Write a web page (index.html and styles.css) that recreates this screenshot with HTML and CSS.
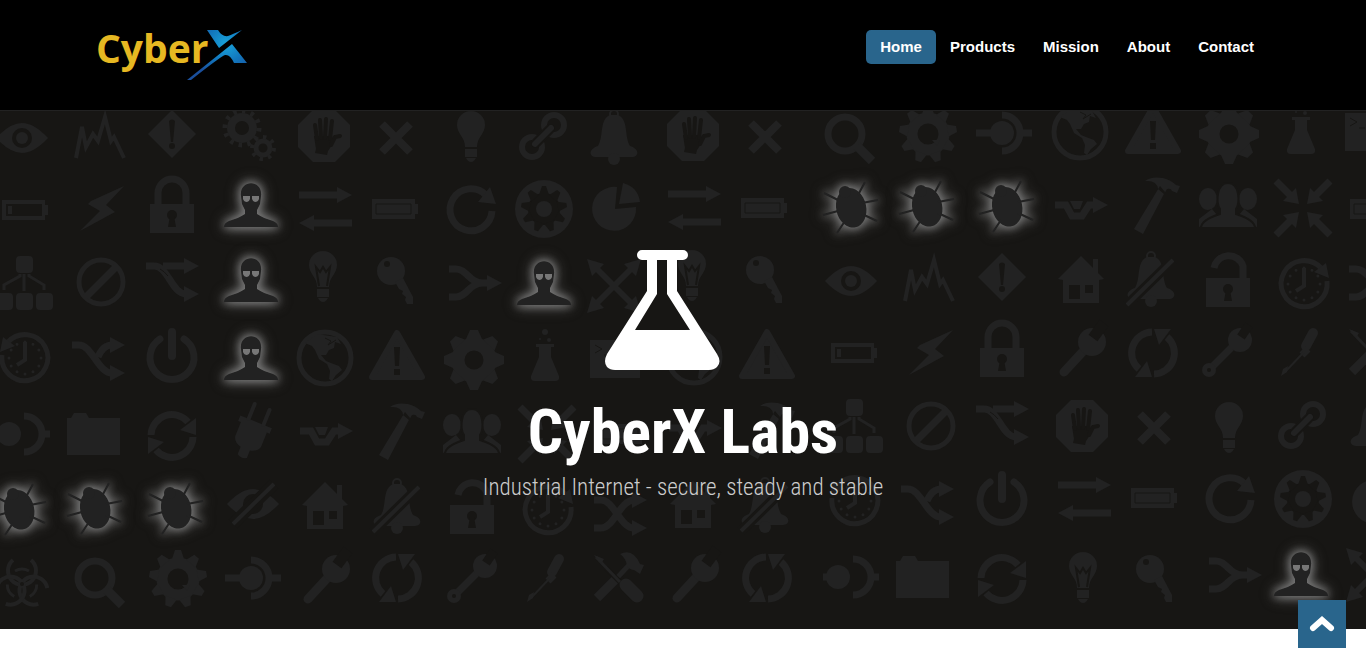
FILE: index.html
```
<!DOCTYPE html>
<html lang="en">
<head>
  <meta charset="UTF-8">
  <meta name="viewport" content="width=device-width, initial-scale=1.0">
  <title>CyberX Labs</title>
  <link rel="stylesheet" href="styles.css">
</head>

<body>
  <header class="header">
    <div class="container">
      <a class="logo" href="#" aria-label="CyberX">
        <svg width="150" height="50" viewBox="0 0 150 50">
          <defs>
            <radialGradient id="logoBlue" gradientUnits="userSpaceOnUse" cx="128" cy="14" r="36">
              <stop offset="0" stop-color="#19a5dc"/>
              <stop offset="0.5" stop-color="#1277bd"/>
              <stop offset="1" stop-color="#1a4f9c"/>
            </radialGradient>
          </defs>
          <text class="logo-text" x="-2" y="33">Cyber</text>
          <path fill="url(#logoBlue)" d="M109 0H120Q124 7 130 6Q135 4 144 0L121 18Z"/>
          <path fill="url(#logoBlue)" d="M89 50L119 26L134 14L149 33H136Q132 24 127 25Q122 27 93 50Z"/>
        </svg>
      </a>
      <nav class="nav">
        <a class="active" href="#home">Home</a>
        <a href="#products">Products</a>
        <a href="#mission">Mission</a>
        <a href="#about">About</a>
        <a href="#contact">Contact</a>
      </nav>
    </div>
  </header>

  <section class="hero" id="home">
    <svg class="pattern" viewBox="0 111 1366 518" preserveAspectRatio="xMidYMin slice" aria-hidden="true">
      <defs>
        <g id="eye"><path d="M-26 0Q-12 -15 0 -15Q12 -15 26 0Q12 15 0 15Q-12 15 -26 0Z"/><circle class="hole" r="10"/><circle r="6"/></g>
        <g id="eyeoff"><path d="M-26 0Q-12 -15 0 -15Q12 -15 26 0Q12 15 0 15Q-12 15 -26 0Z"/><circle class="hole" r="10"/><path class="cut" stroke-width="12" d="M-20 20L21 -20"/><path class="line" stroke-width="4" d="M-20 20L21 -20"/></g>
        <g id="pulse"><path class="line" stroke-width="4" d="M-24 21L-18 -10L-14 10L-7 -3L-2 4L5 -20L11 4L14 0L24 21"/></g>
        <g id="diamond"><path d="M0 -24L24 0L0 24L-24 0Z"/><path class="hole" d="M-3 -13Q0 -16 3 -13L1 8H-1Z"/><circle class="hole" cy="12" r="3"/></g>
        <g id="gears">
          <circle class="line" cx="-8" cy="-9" r="11" stroke-width="8"/><circle class="line" cx="-8" cy="-9" r="17" stroke-width="5" pathLength="24" stroke-dasharray="0.8 1.2"/>
          <circle class="line" cx="13" cy="11" r="7" stroke-width="5"/><circle class="line" cx="13" cy="11" r="11" stroke-width="4" pathLength="16" stroke-dasharray="0.8 1.2"/>
        </g>
        <g id="stop"><path d="M-11 -26H11L26 -11V11L11 26H-11L-26 11V-11Z"/><path class="hole" d="M-10 0L8 0L10 6L4 15L3 19L-9 17L-8 13Z"/><path class="cut round" stroke-width="4" d="M-9 -11L-7 3M-4 -16L-3 2M2 -17L1 2M8 -15L6 3M7 9L11 1L16 0"/></g>
        <g id="times"><path class="line" stroke-width="8" d="M-14 -14L14 14M14 -14L-14 14"/></g>
        <g id="bulb"><path d="M-14 -11a14 14 0 0 1 28 0c0 9 -8 12 -8 22h-12c0 -10 -8 -13 -8 -22Z"/><path d="M-6 13H6V21H-6ZM-5 22H5Q3 26 0 26Q-3 26 -5 22Z"/></g>
        <g id="bulbwire"><use href="#bulb"/><path class="cut" stroke-width="2" d="M-4 10L-7 -9L-3 -4L0 -9L3 -4L7 -9L4 10"/></g>
        <g id="link"><circle class="line" cx="-11" cy="11" r="10" stroke-width="6"/><circle class="line" cx="11" cy="-11" r="10" stroke-width="6"/><path class="cut round" stroke-width="10" d="M-7 7L7 -7"/><path class="line round" stroke-width="6" d="M-8 8L8 -8"/></g>
        <g id="bell"><circle class="line" cy="-24" r="4" stroke-width="2"/><path d="M-4 -23C-15 -18 -10 -2 -16 8C-26 11 -25 19 -18 19H18C25 19 26 11 16 8C10 -2 15 -18 4 -23Z"/><circle cy="21" r="6"/></g>
        <g id="belloff"><use href="#bell"/><path class="cut" stroke-width="10" d="M-24 25L22 -20"/><path class="line" stroke-width="4" d="M-24 25L22 -20"/></g>
        <g id="search"><circle class="line" cx="-5" cy="-4" r="17" stroke-width="7"/><path class="line" stroke-width="9" d="M7 8L22 23"/></g>
        <g id="gear10"><circle class="line" r="16" stroke-width="11"/><path id="tooth10" d="M-6 -20L-3 -29H3L6 -20Z"/><use href="#tooth10" transform="rotate(40)"/><use href="#tooth10" transform="rotate(80)"/><use href="#tooth10" transform="rotate(120)"/><use href="#tooth10" transform="rotate(160)"/><use href="#tooth10" transform="rotate(200)"/><use href="#tooth10" transform="rotate(240)"/><use href="#tooth10" transform="rotate(280)"/><use href="#tooth10" transform="rotate(320)"/><path d="M4 6L9 12L12 6Z"/></g>
        <g id="gear8"><circle class="line" r="16" stroke-width="13"/><path id="tooth8" d="M-8 -21L-4 -30H4L8 -21Z"/><use href="#tooth8" transform="rotate(45)"/><use href="#tooth8" transform="rotate(90)"/><use href="#tooth8" transform="rotate(135)"/><use href="#tooth8" transform="rotate(180)"/><use href="#tooth8" transform="rotate(225)"/><use href="#tooth8" transform="rotate(270)"/><use href="#tooth8" transform="rotate(315)"/></g>
        <g id="gearcircle"><circle r="29"/><circle class="hole" r="16"/><path class="hole" id="notch" d="M-5 -14L-2 -23H2L5 -14Z"/><use href="#notch" transform="rotate(40)"/><use href="#notch" transform="rotate(80)"/><use href="#notch" transform="rotate(120)"/><use href="#notch" transform="rotate(160)"/><use href="#notch" transform="rotate(200)"/><use href="#notch" transform="rotate(240)"/><use href="#notch" transform="rotate(280)"/><use href="#notch" transform="rotate(320)"/><circle r="8"/></g>
        <g id="conn"><circle cx="-2" r="12"/><path class="line" stroke-width="7" d="M-28 0H-10M16 0H28M-2 -18A18 18 0 0 1 -2 18"/></g>
        <g id="disc"><circle cx="-13" r="12"/><path class="line" stroke-width="7" d="M-28 0H-20M22 0H28M2 -18A18 18 0 0 1 2 18"/></g>
        <g id="globe"><circle class="line" r="26" stroke-width="5"/><path d="M-20 -15L-8 -24L12 -21L16 -14L10 -16L9 -10L4 -8L1 -3L-4 -3L1 3L6 5L14 8L17 12L11 17L7 23L4 21L5 13L2 6L-6 1L-10 -8L-13 -12Z"/><path class="cut" stroke-width="1" d="M0 -20L6 -17L3 -13L11 -18"/></g>
        <g id="warn"><path class="solid" stroke-width="6" d="M0 -25L25 19H-25Z"/><path class="hole" d="M-3 -11H3L2 8H-2ZM-3 11H3V17H-3Z"/></g>
        <g id="flask"><path d="M-9 -17H9V-14H6V-4L14 15Q15 20 10 20H-10Q-15 20 -14 15L-6 -4V-14H-9Z"/><circle cy="-29" r="3"/><circle cx="-5" cy="-22" r="1"/><circle cx="4" cy="-21" r="2"/></g>
        <g id="term"><path d="M-25 -19H25V19H-25Z"/><path class="cut" stroke-width="1" d="M-20 -14L-13 -10L-20 -6M-11 -4H-5"/></g>
        <g id="battlow"><path d="M-23 -10H20V-5H23V5H20V10H-23Z"/><path class="hole" d="M-19 -6H17V6H-19Z"/><path d="M-17 -4H-13V4H-17Z"/></g>
        <g id="battfull"><path d="M-23 -10H20V-5H23V5H20V10H-23Z"/><path class="cut" stroke-width="1" d="M-19 -5H16V5H-19Z"/></g>
        <g id="bolt"><path d="M22 -23L-11 -8L-14 -5L-2 2L-22 22L13 3L4 -4Z"/></g>
        <g id="keyhole"><circle class="hole" cy="11" r="5"/><path class="hole" d="M-2 12H2L4 23H-4Z"/></g>
        <g id="lock"><path d="M-22 0H22V29H-22Z"/><path class="line" stroke-width="7" d="M-14 2V-11a14 14 0 0 1 28 0V2"/><use href="#keyhole"/></g>
        <g id="unlock"><path d="M-22 0H22V29H-22Z"/><path class="line" stroke-width="7" d="M-14 -10a15 15 0 0 1 29 -2V2"/><use href="#keyhole"/></g>
        <g id="spy"><path d="M-10 -9C-12 -26 12 -26 10 -9L9 -1L6 5V9C10 12 16 14 22 16Q27 18 27 22H-27Q-27 18 -22 16C-16 14 -10 12 -6 9V5L-9 -1Z"/><path class="glasses" d="M-8 -9H-1V-6Q-2 -3 -4 -3Q-7 -3 -8 -6ZM1 -9H8V-6Q7 -3 4 -3Q2 -3 1 -6Z"/></g>
        <g id="bug"><ellipse cx="1" cy="1" rx="15" ry="20" transform="rotate(-12)"/><circle cx="-5" cy="-15" r="6"/><path class="line" stroke-width="2" d="M-26 -14L-12 -7M-27 8L-12 4M-13 26L-5 14M15 -25L8 -12M28 -7L12 -4M27 14L12 7"/></g>
        <g id="swap"><path class="line" stroke-width="7" d="M-26 -14H13M27 14H-12"/><path d="M12 -22L27 -14L12 -6ZM-11 6L-26 14L-11 22Z"/></g>
        <g id="reload"><path class="line" stroke-width="7" d="M21 1A21 21 0 1 1 15 -15"/><path d="M19 -23L25 -6L7 -8Z"/></g>
        <g id="pie"><path d="M0 2L2 -20A22 22 0 1 0 21 0Z"/><path d="M4 -3L8 -24Q23 -20 25 -5Z"/></g>
        <g id="detour"><path class="line" stroke-width="7" d="M-25 -3H-14L-8 8H2L9 -3H14"/><path d="M-10 -7H3L0 1H-6ZM13 -11L28 -3L13 5Z"/></g>
        <g id="hammer"><path d="M-23 23L-14 28L8 -14L3 -20ZM-12 -25Q-6 -30 6 -28Q14 -26 19 -21L23 -20L20 -13L15 -15Q14 -18 10 -17L7 -12L1 -17Q0 -26 -12 -25Z"/></g>
        <g id="users"><ellipse cx="-20" cy="-6" rx="9" ry="11"/><ellipse cx="20" cy="-6" rx="9" ry="11"/><path d="M-29 22V14L-16 4L-6 16ZM29 22V14L16 4L6 16Z"/><path class="gap" d="M-27 23Q-27 15 -8 9V4C-12 -2 -12 -22 0 -22C12 -22 12 -2 8 4V9Q27 15 27 23Z"/></g>
        <g id="inarrow"><path class="line" stroke-width="7" d="M-27 -27L-12 -12"/><path d="M-4 -4L-20 -7L-7 -20Z"/></g>
        <g id="compress"><use href="#inarrow"/><use href="#inarrow" transform="rotate(90)"/><use href="#inarrow" transform="rotate(180)"/><use href="#inarrow" transform="rotate(270)"/></g>
        <g id="outhead"><path d="M-27 -27L-10 -22L-22 -10Z"/></g>
        <g id="expand"><path class="line" stroke-width="6" d="M-18 -18L18 18M18 -18L-18 18"/><use href="#outhead"/><use href="#outhead" transform="rotate(90)"/><use href="#outhead" transform="rotate(180)"/><use href="#outhead" transform="rotate(270)"/></g>
        <g id="sitemap"><rect x="-8" y="-26" width="17" height="17" rx="4"/><rect x="-28" y="11" width="17" height="17" rx="4"/><rect x="-8" y="11" width="17" height="17" rx="4"/><rect x="12" y="11" width="17" height="17" rx="4"/><path class="line" stroke-width="3" d="M0 -8V9M-4 -8V-6L-20 3V8M5 -8V-6L20 3V8"/></g>
        <g id="ban"><circle class="line" r="22" stroke-width="5"/><path class="line" stroke-width="7" d="M-15 15L15 -15"/></g>
        <g id="branch"><path class="line" stroke-width="7" d="M-26 -15H-18C-4 -15 0 13 14 13M-9 -15H14"/><path class="cut" stroke-width="1" d="M-12 -12Q-8 -10 -4 -5"/><path d="M12 -23L27 -15L12 -7ZM12 5L27 13L12 21Z"/></g>
        <g id="key"><circle cx="-4" cy="-9" r="14"/><path d="M0 2L8 -2L18 17V24H12L10 20L11 17L7 14L8 11L4 9Z"/><circle class="hole" cx="-8" cy="-16" r="3"/></g>
        <g id="merge"><path class="line" stroke-width="7" d="M-26 -14H-19C-8 -14 -6 0 8 0H14M-26 14H-19C-8 14 -6 0 8 0"/><path d="M12 -8L27 0L12 8Z"/></g>
        <g id="house"><path d="M0 -24L23 -1L18 0V23H-18V0L-23 -1ZM12 -21H17V-6L12 -10Z"/><path class="hole" d="M-12 5H-1V19H-12ZM4 5H12V13H4Z"/></g>
        <g id="face"><circle class="line round" r="16" stroke-width="3" pathLength="12" stroke-dasharray="0 1"/><path class="line" stroke-width="4" d="M0 -16V2L-8 7"/></g>
        <g id="dial"><path class="line" stroke-width="5" d="M23 -3A23 23 0 1 1 17 -16"/><path d="M22 -21L25 -6L10 -12Z"/></g>
        <g id="clock"><use href="#face"/><use href="#dial"/></g>
        <g id="clockback"><use href="#face"/><use href="#dial" transform="scale(-1 1)"/></g>
        <g id="random"><path class="line" stroke-width="7" d="M-26 -14H-19C-6 -14 0 14 14 14M0 -2Q5 -14 14 -14"/><path d="M12 -22L27 -14L12 -6ZM12 6L27 14L12 22Z"/></g>
        <g id="shuffle"><path class="line" stroke-width="7" d="M-26 -14H-19C-6 -14 0 14 14 14M-26 14H-19C-6 14 0 -14 14 -14"/><path d="M12 -22L27 -14L12 -6ZM12 6L27 14L12 22Z"/></g>
        <g id="power"><path class="line round" stroke-width="7" d="M-12 -18A22 22 0 1 0 12 -18"/><path class="line round" stroke-width="8" d="M0 -25V-1"/></g>
        <g id="wrench"><path class="line round" stroke-width="9" d="M-18 20L6 -6"/><circle cx="10" cy="-10" r="14"/><path class="cut" stroke-width="11" d="M11 -14L22 -29"/></g>
        <g id="wrench2"><path class="line" stroke-width="7" d="M-17 17L6 -6"/><circle cx="-18" cy="18" r="7"/><circle class="hole" cx="-18" cy="18" r="2"/><circle cx="13" cy="-12" r="12"/><path class="cut" stroke-width="9" d="M14 -15L22 -27"/></g>
        <g id="driver"><path class="line round" stroke-width="10" d="M14 -19L7 -6"/><path class="line" stroke-width="7" d="M9 -3L3 3"/><path class="line" stroke-width="2" d="M5 0L-14 20"/><path d="M-11 14L-12 20L-18 24L-16 17Z"/></g>
        <g id="tools"><path class="line" stroke-width="9" d="M-21 20L-3 2"/><path class="line" stroke-width="5" d="M-3 2L12 -14"/><path d="M2 -24Q15 -30 22 -14L26 -13L22 -4L16 -8Q12 -8 9 -12Q8 -20 2 -24Z"/><path class="cut" stroke-width="5" d="M-12 -10L6 8"/><path class="line" stroke-width="3" d="M-22 -21L2 4"/><path d="M-24 -23L-14 -19L-17 -14Z"/><path class="line round" stroke-width="13" d="M8 7L19 18"/></g>
        <g id="halfsync"><path class="line" stroke-width="7" d="M-21 -1A21 21 0 0 1 16 -14"/><path d="M24 -18V-1L8 -6Z"/></g>
        <g id="sync"><use href="#halfsync"/><use href="#halfsync" transform="rotate(180)"/></g>
        <g id="syncv"><use href="#sync" transform="matrix(0 -1 -1 0 0 0)"/></g>
        <g id="folder"><path d="M-26 -17H-22L-19 -22H-7L-4 -17H27V20H-26Z"/></g>
        <g id="plug"><g transform="rotate(22)"><path d="M-17 -11H17V-5H14V10Q13 16 5 18V26Q0 29 -5 26V18Q-13 16 -14 10V-5H-17Z"/><path class="line round" stroke-width="4" d="M-8 -11V-27M8 -11V-27"/></g></g>
        <g id="lobe"><path class="line" stroke-width="4" d="M-9 -24A14 14 0 1 0 9 -24"/><path class="line" stroke-width="3" d="M-7 -13Q0 -17 7 -13"/></g>
        <g id="biohazard"><use href="#lobe"/><use href="#lobe" transform="rotate(120)"/><use href="#lobe" transform="rotate(240)"/><circle class="hole" r="2"/></g>
      </defs>

      <!-- row 1 -->
      <use href="#eye" x="22" y="138"/><use href="#pulse" x="100" y="137"/><use href="#diamond" x="172" y="134"/><use href="#gears" x="250" y="137"/><use href="#stop" x="324" y="136"/><use href="#times" x="396" y="138"/><use href="#bulb" x="471" y="136"/><use href="#link" x="543" y="136"/><use href="#bell" x="614" y="138"/><use href="#stop" x="693" y="135"/><use href="#times" x="765" y="137"/><use href="#search" x="850" y="138"/><use href="#gear10" x="928" y="134"/><use href="#conn" x="1004" y="133"/><use href="#globe" x="1080" y="132"/><use href="#warn" x="1153" y="132"/><use href="#gear8" x="1229" y="134"/><use href="#flask" x="1301" y="134"/><use href="#term" x="1370" y="132"/>
      <!-- row 2 -->
      <use href="#battlow" x="25" y="210"/><use href="#bolt" x="102" y="209"/><use href="#lock" x="172" y="204"/><use href="#swap" x="325" y="209"/><use href="#battfull" x="395" y="209"/><use href="#reload" x="471" y="210"/><use href="#gearcircle" x="544" y="209"/><use href="#pie" x="615" y="207"/><use href="#swap" x="694" y="208"/><use href="#battfull" x="764" y="208"/><use href="#detour" x="1080" y="208"/><use href="#hammer" x="1157" y="206"/><use href="#users" x="1228" y="205"/><use href="#compress" x="1303" y="208"/><use href="#battfull" x="1373" y="209"/>
      <!-- row 3 -->
      <use href="#sitemap" x="24" y="282"/><use href="#ban" x="101" y="282"/><use href="#branch" x="172" y="281"/><use href="#bulbwire" x="323" y="276"/><use href="#key" x="395" y="280"/><use href="#merge" x="475" y="283"/><use href="#expand" x="614" y="286"/><use href="#bulbwire" x="692" y="275"/><use href="#key" x="764" y="279"/><use href="#eye" x="851" y="281"/><use href="#pulse" x="929" y="280"/><use href="#diamond" x="1002" y="277"/><use href="#house" x="1081" y="280"/><use href="#belloff" x="1151" y="280"/><use href="#unlock" x="1228" y="278"/><use href="#clock" x="1304" y="284"/><use href="#merge" x="1375" y="283"/>
      <!-- row 4 -->
      <use href="#clockback" x="25" y="358"/><use href="#random" x="98" y="359"/><use href="#power" x="172" y="357"/><use href="#globe" x="325" y="358"/><use href="#warn" x="397" y="358"/><use href="#gear8" x="474" y="360"/><use href="#flask" x="545" y="361"/><use href="#term" x="615" y="359"/><use href="#globe" x="694" y="357"/><use href="#warn" x="767" y="357"/><use href="#battlow" x="854" y="353"/><use href="#bolt" x="931" y="353"/><use href="#lock" x="1002" y="348"/><use href="#wrench" x="1082" y="352"/><use href="#syncv" x="1153" y="353"/><use href="#wrench2" x="1227" y="352"/><use href="#driver" x="1299" y="352"/><use href="#tools" x="1373" y="352"/>
      <!-- row 5 -->
      <use href="#disc" x="22" y="434"/><use href="#folder" x="93" y="435"/><use href="#sync" x="172" y="436"/><use href="#plug" x="252" y="432"/><use href="#detour" x="325" y="434"/><use href="#hammer" x="402" y="432"/><use href="#users" x="472" y="431"/><use href="#compress" x="547" y="434"/><use href="#battfull" x="622" y="434"/><use href="#detour" x="694" y="431"/><use href="#hammer" x="772" y="431"/><use href="#sitemap" x="854" y="425"/><use href="#ban" x="931" y="426"/><use href="#branch" x="1002" y="424"/><use href="#stop" x="1082" y="426"/><use href="#times" x="1154" y="428"/><use href="#bulb" x="1229" y="427"/><use href="#link" x="1302" y="425"/><use href="#bell" x="1374" y="427"/>
      <!-- row 6 -->
      <use href="#eyeoff" x="253" y="504"/><use href="#house" x="325" y="506"/><use href="#belloff" x="397" y="507"/><use href="#unlock" x="472" y="505"/><use href="#clock" x="548" y="510"/><use href="#shuffle" x="620" y="514"/><use href="#house" x="693" y="505"/><use href="#belloff" x="765" y="506"/><use href="#clockback" x="855" y="501"/><use href="#random" x="927" y="503"/><use href="#power" x="1002" y="500"/><use href="#swap" x="1084" y="499"/><use href="#battfull" x="1154" y="498"/><use href="#reload" x="1230" y="499"/><use href="#gearcircle" x="1303" y="499"/><use href="#pie" x="1375" y="500"/>
      <!-- row 7 -->
      <use href="#biohazard" x="22" y="584"/><use href="#search" x="100" y="582"/><use href="#gear10" x="178" y="579"/><use href="#conn" x="253" y="578"/><use href="#wrench" x="326" y="579"/><use href="#syncv" x="397" y="578"/><use href="#wrench2" x="472" y="578"/><use href="#driver" x="545" y="578"/><use href="#tools" x="618" y="578"/><use href="#wrench" x="695" y="578"/><use href="#syncv" x="767" y="578"/><use href="#disc" x="851" y="577"/><use href="#folder" x="922" y="578"/><use href="#sync" x="1002" y="579"/><use href="#bulbwire" x="1083" y="577"/><use href="#key" x="1154" y="578"/><use href="#merge" x="1235" y="575"/><use href="#expand" x="1373" y="575"/>
      <!-- threats -->
      <g class="lit">
        <use href="#spy" x="251" y="205"/><use href="#spy" x="251" y="280"/><use href="#spy" x="251" y="358"/><use href="#spy" x="544" y="283"/><use href="#spy" x="1301" y="574"/>
        <use href="#bug" x="850" y="207"/><use href="#bug" x="926" y="206"/><use href="#bug" x="1006" y="206"/>
        <use href="#bug" x="18" y="509"/><use href="#bug" x="94" y="508"/><use href="#bug" x="175" y="508"/>
      </g>
    </svg>

    <div class="hero-content">
      <svg class="hero-icon" width="156" height="120" viewBox="0 0 156 120" aria-hidden="true">
        <path fill="#fff" fill-rule="evenodd" d="M37 0H78A5 5 0 0 1 78 10H72V41L112 104Q117 112 112 117Q109 120 104 120H10Q5 120 2 117Q-2 112 2 104L42 41V10H37A5 5 0 0 1 37 0ZM52 10V44L30 80H85L62 44V10Z"/>
      </svg>
      <h1>CyberX Labs</h1>
      <p>Industrial Internet - secure, steady and stable</p>
    </div>
  </section>

  <a class="to-top" href="#" aria-label="Back to top">
    <svg width="26" height="16" viewBox="0 0 26 16"><path d="M4 12L13 4L22 12"/></svg>
  </a>
</body>
</html>
```
FILE: styles.css
```
body {
  margin: 0;
  background-color: #fff;
  font-family: "Liberation Sans", Arial, sans-serif;
}

.header {
  background-color: #000;
  border-bottom: 1px solid #222;
}

.container {
  max-width: 1170px;
  margin: 0 auto;
  padding: 30px 0;
  display: flex;
  justify-content: space-between;
  align-items: flex-start;
}

.logo svg {
  display: block;
  overflow: visible;
}

.logo-text {
  font-family: "Open Sans", "Noto Sans", sans-serif;
  font-size: 39px;
  font-weight: 700;
  fill: #e6b822;
}

.nav {
  display: flex;
}

.nav a {
  padding: 0 14px;
  border-radius: 5px;
  color: #fff;
  font-size: 15px;
  font-weight: bold;
  line-height: 34px;
  text-decoration: none;
}

.nav a.active {
  background-color: #29658c;
}

.hero {
  position: relative;
  overflow: hidden;
  background-color: #171614;
}

/* icon wallpaper behind the title */
.pattern {
  position: absolute;
  top: 0;
  left: 0;
  width: 100%;
  height: 100%;
  fill: #222;
}

.pattern .hole {
  fill: #171614;
}

.pattern .line {
  fill: none;
  stroke: #222;
}

.pattern .cut {
  fill: none;
  stroke: #171614;
}

.pattern .solid {
  stroke: #222;
  stroke-linejoin: round;
}

.pattern .gap {
  stroke: #171614;
  stroke-width: 2px;
}

.pattern .round {
  stroke-linecap: round;
}

.pattern .glasses {
  fill: #777;
}

.lit use {
  filter: drop-shadow(0 0 4px #777) drop-shadow(0 0 6px #777);
}

.hero-content {
  position: relative;
  padding: 139px 20px 124px;
  text-align: center;
}

.hero-icon {
  display: block;
  margin: 0 auto;
}

h1 {
  margin: 24px 0 0;
  color: #fff;
  font-family: "Roboto Condensed", "Liberation Sans Narrow", Roboto, sans-serif;
  font-size: 62px;
  font-weight: bold;
  line-height: 76px;
}

.hero p {
  margin: 2px 0 0;
  padding-bottom: 2px;
  color: #ccc;
  font-family: "Roboto Condensed", "Liberation Sans Narrow", Roboto, sans-serif;
  font-size: 23px;
  font-weight: 300;
  line-height: 31px;
}

.to-top {
  position: fixed;
  right: 20px;
  bottom: 19px;
  width: 48px;
  height: 48px;
  display: flex;
  align-items: center;
  justify-content: center;
  background-color: #29658c;
}

.to-top path {
  fill: none;
  stroke: #fff;
  stroke-width: 6px;
  stroke-linecap: round;
}
```
